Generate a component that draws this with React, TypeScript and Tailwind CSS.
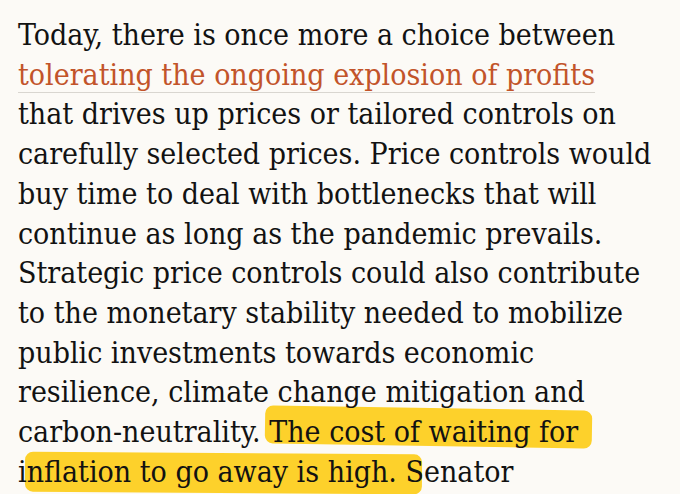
const lines: React.ReactNode[] = [];

function Highlight({ children, cls }: { children: React.ReactNode; cls: string }) {
  return (
    <span className="relative">
      <span className={cls} aria-hidden="true"></span>
      {children}
    </span>
  );
}

export default function App() {
  void lines;
  return (
    <div
      className="isolate w-[680px] h-[494px] overflow-hidden bg-[#fcfaf6] pl-[18px] pt-[15px] text-[#121212] text-[30px] leading-[39.7px] whitespace-nowrap"
      style={{ fontFamily: "'DejaVu Serif Condensed', 'DejaVu Serif', serif" }}
    >
      <div>Today, there is once more a choice between</div>
      <div>
        <a className="text-[#c2542a] underline decoration-[#d9d6d0] decoration-1 underline-offset-[7px]">
          tolerating the ongoing explosion of profits
        </a>
      </div>
      <div>that drives up prices or tailored controls on</div>
      <div>carefully selected prices. Price controls would</div>
      <div>buy time to deal with bottlenecks that will</div>
      <div>continue as long as the pandemic prevails.</div>
      <div>Strategic price controls could also contribute</div>
      <div>to the monetary stability needed to mobilize</div>
      <div>public investments towards economic</div>
      <div>resilience, climate change mitigation and</div>
      <div>
        carbon-neutrality.{" "}
        <span className="relative">
          <span
            aria-hidden="true"
            className="absolute -z-10 left-[-4px] right-[-14px] top-[-6px] h-[38px] rounded-[8px] bg-[#fdd12b] rotate-[0.9deg]"
          ></span>
          The cost of waiting for
        </span>
      </div>
      <div className="relative">
        <span
          aria-hidden="true"
          className="absolute -z-10 left-[7px] w-[397px] top-[1px] h-[40px] rounded-[8px] bg-[#fdd12b] rotate-[0.4deg]"
        ></span>
        inflation to go away is high. Senator
      </div>
    </div>
  );
}
